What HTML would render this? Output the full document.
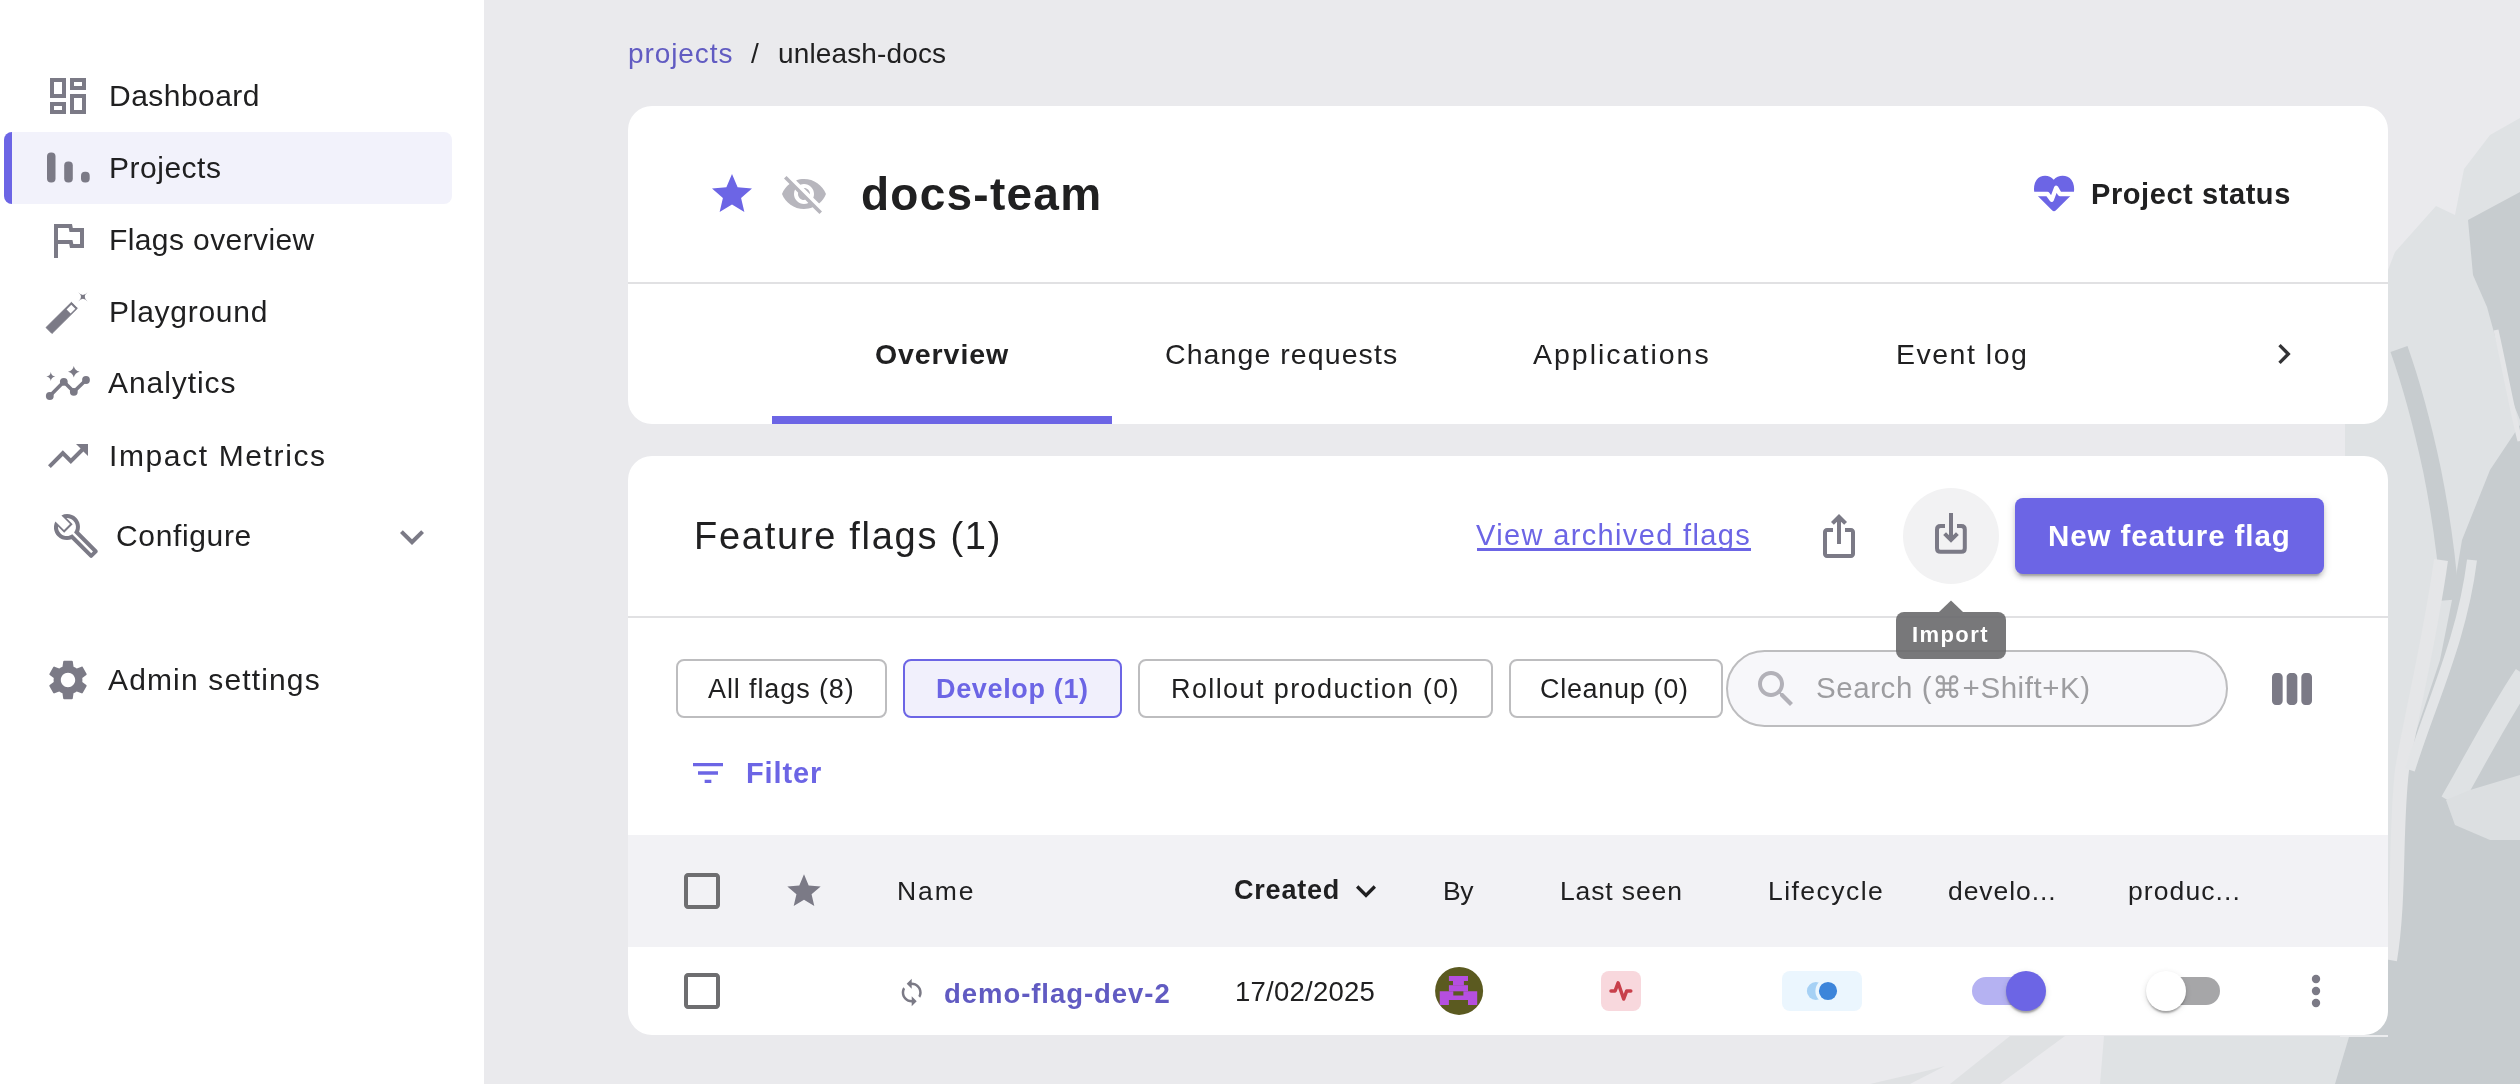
<!DOCTYPE html>
<html><head><meta charset="utf-8">
<style>
html,body{margin:0;padding:0;}
body{width:2520px;height:1084px;overflow:hidden;background:#eaeaed;position:relative;font-family:"Liberation Sans",sans-serif;}
.a{position:absolute;box-sizing:border-box;}
.t{position:absolute;white-space:nowrap;font-family:"Liberation Sans",sans-serif;z-index:5;will-change:transform;}
svg.layer{position:absolute;left:0;top:0;width:2520px;height:1084px;}
</style></head>
<body>
<!-- background texture -->
<svg class="layer" style="z-index:0" viewBox="0 0 2520 1084">
  <path fill="#dfe2e4" d="M2520 118 L2490 135 L2464 169 L2455 215 L2436 206 L2395 252 L2388 270 L2388 380 L2345 424 L2345 456 L2340 480 L2340 1036 L2104 1036 L2100 1084 L2520 1084 Z"/>
  <path fill="#dfe1e3" d="M2010 1036 L2065 1036 L2000 1084 L1950 1084 Z M1930 1070 L1945 1066 L1910 1084 L1870 1084 Z"/>
  <path fill="#c7cccf" d="M2520 192 L2468 220 L2473 275 L2487 307 L2501 358 L2510 395 L2520 420 Z"/>
  <path fill="none" stroke="#c7cccf" stroke-width="18" d="M2399 349 C2410 380 2422 423 2432 470 C2440 510 2447 560 2450 600"/>
  <path fill="#c7cccf" d="M2520 425 L2490 470 L2462 540 L2452 600 L2440 660 L2420 720 L2400 780 L2395 900 L2375 960 L2340 1000 L2340 1037 L2349 1037 L2335 1084 L2520 1084 Z"/>
  <path fill="none" stroke="#e5e6e8" stroke-width="5" d="M2496 330 C2505 370 2512 410 2520 441"/>
  <path fill="none" stroke="#e5e6e8" stroke-width="14" d="M2441 560 C2430 640 2410 720 2402 770 C2395 830 2400 900 2390 960"/>
  <path fill="none" stroke="#e3e5e7" stroke-width="10" d="M2472 560 C2462 640 2432 700 2410 770"/>
  <path fill="none" stroke="#dfe2e4" stroke-width="22" d="M2525 675 C2495 720 2470 770 2451 802"/>
  <path fill="#dcdfe1" d="M2446 800 L2470 790 L2520 775 L2520 840 L2490 840 L2455 825 Z"/>
</svg>

<!-- sidebar -->
<div class="a" style="left:0;top:0;width:484px;height:1084px;background:#ffffff;z-index:1"></div>
<div class="a" style="left:4px;top:132px;width:448px;height:72px;background:#f2f2fb;border-radius:8px;z-index:1;overflow:hidden">
  <div class="a" style="left:0;top:0;width:8px;height:72px;background:#6c65e5"></div>
</div>

<!-- card 1 -->
<div class="a" style="left:628px;top:106px;width:1760px;height:318px;background:#ffffff;border-radius:24px;z-index:1;overflow:hidden">
  <div class="a" style="left:0;top:176px;width:1760px;height:2px;background:#e1e1e3"></div>
  <div class="a" style="left:144px;top:310px;width:340px;height:8px;background:#6c65e5"></div>
</div>

<!-- card 2 -->
<div class="a" style="left:628px;top:456px;width:1760px;height:579px;background:#ffffff;border-radius:24px;z-index:1;overflow:hidden">
  <div class="a" style="left:0;top:160px;width:1760px;height:2px;background:#e1e1e3"></div>
  <div class="a" style="left:0;top:379px;width:1760px;height:112px;background:#f2f2f5"></div>
</div>

<div class="a" style="left:2340px;top:1035px;width:48px;height:2px;background:#ebecee;z-index:1"></div>
<!-- import circle -->
<div class="a" style="left:1903px;top:488px;width:96px;height:96px;border-radius:50%;background:#f2f2f3;z-index:2"></div>
<!-- new feature flag button -->
<div class="a" style="left:2015px;top:498px;width:309px;height:76px;border-radius:8px;background:#6c65e5;z-index:2;box-shadow:0 6px 2px -4px rgba(0,0,0,.2),0 4px 4px 0 rgba(0,0,0,.14),0 2px 10px 0 rgba(0,0,0,.12)"></div>

<!-- chips -->
<div class="a" style="left:676px;top:659px;width:211px;height:59px;border:2px solid #bdbdbf;border-radius:8px;background:#fff;z-index:2"></div>
<div class="a" style="left:903px;top:659px;width:219px;height:59px;border:2px solid #6c65e5;border-radius:8px;background:#f1f0fc;z-index:2"></div>
<div class="a" style="left:1138px;top:659px;width:355px;height:59px;border:2px solid #bdbdbf;border-radius:8px;background:#fff;z-index:2"></div>
<div class="a" style="left:1509px;top:659px;width:214px;height:59px;border:2px solid #bdbdbf;border-radius:8px;background:#fff;z-index:2"></div>
<!-- search -->
<div class="a" style="left:1726px;top:650px;width:502px;height:77px;border:2px solid #bdbdbf;border-radius:40px;background:#f7f7fa;z-index:2"></div>

<!-- row boxes -->
<div class="a" style="left:1601px;top:971px;width:40px;height:40px;border-radius:8px;background:#f8d8dd;z-index:2"></div>
<div class="a" style="left:1782px;top:971px;width:80px;height:40px;border-radius:8px;background:#ebf6fe;z-index:2"></div>

<!-- toggles -->
<div class="a" style="left:1972px;top:977px;width:68px;height:28px;border-radius:14px;background:#b5b2f2;z-index:2"></div>
<div class="a" style="left:2006px;top:971px;width:40px;height:40px;border-radius:50%;background:#6c65e5;z-index:2;box-shadow:0 4px 2px -2px rgba(0,0,0,.2),0 2px 2px 0 rgba(0,0,0,.14),0 2px 6px 0 rgba(0,0,0,.12)"></div>
<div class="a" style="left:2152px;top:977px;width:68px;height:28px;border-radius:14px;background:#a6a6a8;z-index:2"></div>
<div class="a" style="left:2146px;top:971px;width:40px;height:40px;border-radius:50%;background:#ffffff;z-index:2;box-shadow:0 4px 2px -2px rgba(0,0,0,.2),0 2px 2px 0 rgba(0,0,0,.14),0 2px 6px 0 rgba(0,0,0,.12)"></div>

<!-- icons -->
<svg class="layer" style="z-index:3" viewBox="0 0 2520 1084">
  <g fill="#7b7a86">
    <svg x="44" y="72" width="48" height="48" viewBox="0 0 24 24"><path d="M19 5v2h-4V5h4M9 5v6H5V5h4m10 8v6h-4v-6h4M9 17v2H5v-2h4M21 3h-8v6h8V3zM11 3H3v10h8V3zm10 8h-8v10h8V11zm-10 4H3v6h8v-6z"/></svg>
    <rect x="47" y="152.5" width="8.5" height="30" rx="4"/>
    <rect x="64.2" y="161.4" width="8.6" height="21.1" rx="4"/>
    <rect x="81" y="171.7" width="8.7" height="10.8" rx="4"/>
    <svg x="44" y="216" width="48" height="48" viewBox="0 0 24 24"><path d="M12.36 6l.4 2H18v6h-3.36l-.4-2H7V6h5.36M14 4H5v17h2v-7h5.6l.4 2h7V6h-5.6L14 4z"/></svg>
    <path d="M51.96 333.48 L46.04 327.52 L71.44 302.32 L77.36 308.28 Z" stroke="#7b7a86" stroke-width="1" stroke-linejoin="round"/>
    <path d="M66.6 309.4 L71.3 304.7 L75.3 308.7 L70.6 313.4 Z" fill="#ffffff"/>
    <path d="M78.25 292.15 Q82.9 297.6 87.55 292.15 Q82.1 296.8 87.55 301.45 Q82.9 296.0 78.25 301.45 Q83.7 296.8 78.25 292.15Z"/>
    <polyline points="49.8,396 63.8,381.8 73.8,391.8 86,380" fill="none" stroke="#7b7a86" stroke-width="3.6"/>
    <circle cx="49.8" cy="396" r="3.9"/><circle cx="63.8" cy="381.8" r="3.9"/><circle cx="73.8" cy="391.8" r="3.9"/><circle cx="86" cy="380" r="3.9"/>
    <path d="M73.8 365.9 Q74.8 370.7 79.6 371.7 Q74.8 372.7 73.8 377.5 Q72.8 372.7 68 371.7 Q72.8 370.7 73.8 365.9Z"/>
    <path d="M50.8 372.1 Q51.3 376.1 55.3 376.6 Q51.3 377.1 50.8 381.1 Q50.3 377.1 46.3 376.6 Q50.3 376.1 50.8 372.1Z"/>
    <svg x="44" y="432" width="48" height="48" viewBox="0 0 24 24"><path d="m16 6 2.29 2.29-4.88 4.88-4-4L2 16.59 3.41 18l6-6 4 4 6.3-6.29L22 12V6z"/></svg>
    <svg x="52" y="512" width="48" height="48" viewBox="0 0 24 24"><path d="M22.61 18.99l-9.08-9.08c.93-2.34.45-5.1-1.44-7-1.99-1.99-4.99-2.4-7.38-1.21l4.29 4.29-3 3-4.29-4.29C.44 7.1.85 10.1 2.84 12.09c1.87 1.87 4.66 2.38 6.94 1.51l9.08 9.08c.39.39 1.02.39 1.41 0l2.3-2.3c.4-.38.4-1.02.04-1.39zm-3 1.6l-9.46-9.46c-.61.45-1.29.72-2 .82-1.36.2-2.79-.21-3.83-1.25C3.37 9.76 2.93 8.5 3 7.26l3.09 3.09 4.24-4.24-3.09-3.09c1.24-.07 2.49.37 3.44 1.31 1.08 1.08 1.49 2.57 1.24 3.96-.12.71-.42 1.37-.88 1.96l9.45 9.45-.88.89z"/></svg>
    <svg x="388" y="513" width="48" height="48" viewBox="0 0 24 24"><path d="M16.59 8.59 12 13.17 7.41 8.59 6 10l6 6 6-6z"/></svg>
    <svg x="44" y="656" width="48" height="48" viewBox="0 0 24 24"><path d="M19.14 12.94c.04-.3.06-.61.06-.94 0-.32-.02-.64-.07-.94l2.03-1.58c.18-.14.23-.41.12-.61l-1.92-3.32c-.12-.22-.37-.29-.59-.22l-2.39.96c-.5-.38-1.03-.7-1.62-.94l-.36-2.54c-.04-.24-.24-.41-.48-.41h-3.84c-.24 0-.43.17-.47.41l-.36 2.54c-.59.24-1.13.57-1.62.94l-2.39-.96c-.22-.08-.47 0-.59.22L2.74 8.87c-.12.21-.08.47.12.61l2.03 1.58c-.05.3-.09.63-.09.94s.02.64.07.94l-2.03 1.58c-.18.14-.23.41-.12.61l1.92 3.32c.12.22.37.29.59.22l2.39-.96c.5.38 1.03.7 1.62.94l.36 2.54c.05.24.24.41.48.41h3.84c.24 0 .44-.17.47-.41l.36-2.54c.59-.24 1.13-.56 1.62-.94l2.39.96c.22.08.47 0 .59-.22l1.92-3.32c.12-.22.07-.47-.12-.61l-2.01-1.58zM12 15.6c-1.98 0-3.6-1.62-3.6-3.6s1.62-3.6 3.6-3.6 3.6 1.62 3.6 3.6-1.62 3.6-3.6 3.6z"/></svg>
  </g>
  <!-- card1 icons -->
  <svg x="708" y="170" width="48" height="48" viewBox="0 0 24 24" fill="#6c65e5"><path d="M12 17.27 18.18 21l-1.64-7.03L22 9.24l-7.19-.61L12 2 9.19 8.63 2 9.24l5.46 4.73L5.82 21z"/></svg>
  <svg x="780" y="170" width="48" height="48" viewBox="0 0 24 24" fill="#b7b6bd"><path d="M12 7c2.76 0 5 2.24 5 5 0 .65-.13 1.26-.36 1.83l2.92 2.92c1.51-1.26 2.7-2.89 3.43-4.75-1.73-4.39-6-7.5-10.99-7.5-1.4 0-2.74.25-3.98.7l2.16 2.16C10.74 7.13 11.35 7 12 7zM2 4.27l2.28 2.28.46.46C3.08 8.3 1.78 10.02 1 12c1.73 4.39 6 7.5 11 7.5 1.55 0 3.03-.3 4.38-.84l.42.42L19.73 22 21 20.73 3.27 3 2 4.27zM7.53 9.8l1.55 1.55c-.05.21-.08.43-.08.65 0 1.66 1.34 3 3 3 .22 0 .44-.03.65-.08l1.55 1.55c-.67.33-1.41.53-2.2.53-2.76 0-5-2.24-5-5 0-.79.2-1.53.53-2.2zm4.31-.78 3.15 3.15.02-.16c0-1.66-1.34-3-3-3l-.17.01z"/></svg>
  <g>
    <path fill="#6c65e5" d="M2056 210.2 Q2054 212.2 2052 210.2 L2034.3 192.6 C2033.6 188 2034 183.5 2036.5 180 C2040.5 174.5 2049.5 174.5 2053.7 179.8 C2058 174.5 2067.5 174.5 2071.5 180 C2074 183.5 2074.6 188 2073.9 192.6 Z"/>
    <polyline fill="none" stroke="#ffffff" stroke-width="4.4" stroke-linejoin="round" points="2028,194 2047.5,194 2051.7,199.8 2056.2,187.8 2059.8,194 2080,194"/>
  </g>
  <svg x="2264" y="334" width="40" height="40" viewBox="0 0 24 24" fill="#333335"><path d="M8.59 16.59 13.17 12 8.59 7.41 10 6l6 6-6 6-1.41-1.41z"/></svg>
  <!-- card2 icons -->
  <svg x="1815" y="512" width="48" height="48" viewBox="0 0 24 24" fill="#7b7a86"><path d="M16 5l-1.42 1.42-1.59-1.59V16h-1.98V4.83L9.42 6.42 8 5l4-4 4 4zm4 5v11c0 1.1-.9 2-2 2H6c-1.11 0-2-.9-2-2V10c0-1.11.89-2 2-2h3v2H6v11h12V10h-3V8h3c1.1 0 2 .89 2 2z"/></svg>
  <g fill="none" stroke="#7b7a86" stroke-width="4">
    <path d="M1951 513 V540"/>
    <polyline points="1944.6,533.6 1951,540 1957.4,533.6"/>
    <path d="M1945 526.1 H1940.5 Q1937 526.1 1937 529.6 V548.2 Q1937 551.7 1940.5 551.7 H1961.3 Q1964.8 551.7 1964.8 548.2 V529.6 Q1964.8 526.1 1961.3 526.1 H1957"/>
  </g>
  <svg x="1752" y="665" width="48" height="48" viewBox="0 0 24 24" fill="#b2b1b8"><path d="M15.5 14h-.79l-.28-.27C15.41 12.59 16 11.11 16 9.5 16 5.91 13.09 3 9.5 3S3 5.91 3 9.5 5.91 16 9.5 16c1.61 0 3.090-.59 4.23-1.57l.27.28v.79l5 4.99L20.49 19l-4.99-5zm-6 0C7.01 14 5 11.99 5 9.5S7.01 5 9.5 5 14 7.01 14 9.5 11.99 14 9.5 14z"/></svg>
  <svg x="2268" y="665" width="48" height="48" viewBox="0 0 24 24" fill="#7b7a86"><path d="M5.33 20H4c-1.1 0-2-.9-2-2V6c0-1.1.9-2 2-2h1.33c1.1 0 2 .9 2 2v12c0 1.1-.89 2-2 2zM22 18V6c0-1.1-.9-2-2-2h-1.33c-1.1 0-2 .9-2 2v12c0 1.1.9 2 2 2H20c1.1 0 2-.9 2-2zm-7.33 0V6c0-1.1-.9-2-2-2h-1.33c-1.1 0-2 .9-2 2v12c0 1.1.9 2 2 2h1.33c1.1 0 2-.9 2-2z"/></svg>
  <svg x="688" y="753" width="40" height="40" viewBox="0 0 24 24" fill="#6c65e5"><path d="M10 18h4v-2h-4v2zM3 6v2h18V6H3zm3 7h12v-2H6v2z"/></svg>
  <svg x="678" y="867" width="48" height="48" viewBox="0 0 24 24" fill="#6e6e70"><path d="M19 5v14H5V5h14m0-2H5c-1.1 0-2 .9-2 2v14c0 1.1.9 2 2 2h14c1.1 0 2-.9 2-2V5c0-1.1-.9-2-2-2z"/></svg>
  <svg x="678" y="967" width="48" height="48" viewBox="0 0 24 24" fill="#6e6e70"><path d="M19 5v14H5V5h14m0-2H5c-1.1 0-2 .9-2 2v14c0 1.1.9 2 2 2h14c1.1 0 2-.9 2-2V5c0-1.1-.9-2-2-2z"/></svg>
  <svg x="784" y="871" width="40" height="40" viewBox="0 0 24 24" fill="#7b7a86"><path d="M12 17.27 18.18 21l-1.64-7.03L22 9.24l-7.19-.61L12 2 9.19 8.63 2 9.24l5.46 4.73L5.82 21z"/></svg>
  <svg x="1346" y="871" width="40" height="40" viewBox="0 0 24 24" fill="#202021"><path d="M7.41 8.59 12 13.17l4.59-4.58L18 10l-6 6-6-6 1.41-1.41z"/></svg>
  <svg x="896.7" y="977.5" width="30" height="30" viewBox="0 0 24 24" fill="#7b7a86"><path d="M12 4V1L8 5l4 4V6c3.31 0 6 2.69 6 6 0 1.01-.25 1.97-.7 2.8l1.46 1.46C19.54 15.03 20 13.57 20 12c0-4.42-3.58-8-8-8zm0 14c-3.31 0-6-2.69-6-6 0-1.01.25-1.97.7-2.8L5.24 7.74C4.46 8.97 4 10.430 4 12c0 4.42 3.58 8 8 8v3l4-4-4-4v3z"/></svg>
  <!-- avatar -->
  <circle cx="1459.1" cy="990.9" r="24" fill="#5b5a20"/>
  <g fill="#b54fe0">
    <rect x="1448.9" y="976" width="19.1" height="5"/>
    <rect x="1453" y="980.9" width="10.9" height="4.4"/>
    <rect x="1448.9" y="985.2" width="19.1" height="6.1"/>
    <path d="M1439.75 991.2 H1477.2 V1004.9 H1468 V1000 H1448.9 V1004.9 H1439.75 Z M1453.3 991.2 V995.5 H1463.4 V991.2 Z" fill-rule="evenodd"/>
  </g>
  <polyline fill="none" stroke="#c8404b" stroke-width="3.5" stroke-linecap="round" stroke-linejoin="round" points="1611,990.9 1615.1,990.9 1618.1,982.8 1623.7,999 1626.7,990.9 1630.8,990.9"/>
  <!-- lifecycle -->
  <path fill="#a6d1f5" fill-rule="evenodd" d="M1815.9 982 A9 9 0 1 0 1815.9 1000 A9 9 0 1 0 1815.9 982 Z"/>
  <circle cx="1828" cy="991" r="12.6" fill="#ebf6fe"/>
  <circle cx="1828" cy="991" r="9.1" fill="#3d85da"/>
  <!-- kebab -->
  <g fill="#7b7a86"><circle cx="2316" cy="979" r="4.2"/><circle cx="2316" cy="991" r="4.2"/><circle cx="2316" cy="1003" r="4.2"/></g>
</svg>

<div class="t" id="sb1" style="left:109.00px;top:81.10px;font-size:30.00px;line-height:30.00px;letter-spacing:0.462px;color:#202021;">Dashboard</div>
<div class="t" id="sb2" style="left:109.00px;top:152.60px;font-size:30.00px;line-height:30.00px;letter-spacing:0.514px;color:#202021;">Projects</div>
<div class="t" id="sb3" style="left:108.60px;top:224.60px;font-size:30.00px;line-height:30.00px;letter-spacing:0.400px;color:#202021;">Flags overview</div>
<div class="t" id="sb4" style="left:108.60px;top:297.00px;font-size:30.00px;line-height:30.00px;letter-spacing:0.733px;color:#202021;">Playground</div>
<div class="t" id="sb5" style="left:108.00px;top:368.40px;font-size:30.00px;line-height:30.00px;letter-spacing:0.925px;color:#202021;">Analytics</div>
<div class="t" id="sb6" style="left:109.00px;top:441.10px;font-size:30.00px;line-height:30.00px;letter-spacing:1.615px;color:#202021;">Impact Metrics</div>
<div class="t" id="sb7" style="left:116.40px;top:520.60px;font-size:30.00px;line-height:30.00px;letter-spacing:0.650px;color:#202021;">Configure</div>
<div class="t" id="sb8" style="left:107.80px;top:664.60px;font-size:30.00px;line-height:30.00px;letter-spacing:1.146px;color:#202021;">Admin settings</div>
<div class="t" id="bc1" style="left:628.00px;top:40.29px;font-size:28.00px;line-height:28.00px;letter-spacing:0.914px;color:#615bc2;">projects</div>
<div class="t" id="bc2" style="left:750.60px;top:40.29px;font-size:28.00px;line-height:28.00px;letter-spacing:0.000px;color:#202021;">/</div>
<div class="t" id="bc3" style="left:777.80px;top:40.29px;font-size:28.00px;line-height:28.00px;letter-spacing:0.136px;color:#202021;">unleash-docs</div>
<div class="t" id="h1" style="left:860.60px;top:170.95px;font-size:46.00px;line-height:46.00px;letter-spacing:1.250px;color:#202021;font-weight:700;">docs-team</div>
<div class="t" id="h2" style="left:2090.60px;top:179.65px;font-size:29.00px;line-height:29.00px;letter-spacing:0.577px;color:#202021;font-weight:700;">Project status</div>
<div class="t" id="t1" style="left:874.50px;top:340.27px;font-size:28.50px;line-height:28.50px;letter-spacing:0.914px;color:#202021;font-weight:700;">Overview</div>
<div class="t" id="t2" style="left:1165.00px;top:340.27px;font-size:28.50px;line-height:28.50px;letter-spacing:1.079px;color:#202021;">Change requests</div>
<div class="t" id="t3" style="left:1533.20px;top:340.27px;font-size:28.50px;line-height:28.50px;letter-spacing:2.000px;color:#202021;">Applications</div>
<div class="t" id="t4" style="left:1896.00px;top:340.27px;font-size:28.50px;line-height:28.50px;letter-spacing:1.500px;color:#202021;">Event log</div>
<div class="t" id="c1" style="left:693.70px;top:516.73px;font-size:38.00px;line-height:38.00px;letter-spacing:1.719px;color:#202021;">Feature flags (1)</div>
<div class="t" id="c2" style="left:1476.30px;top:521.45px;font-size:29.00px;line-height:29.00px;letter-spacing:1.361px;color:#6c65e5;">View archived flags</div>
<div class="t" id="c3" style="left:2048.00px;top:521.02px;font-size:29.50px;line-height:29.50px;letter-spacing:0.933px;color:#ffffff;font-weight:700;">New feature flag</div>
<div class="t" id="ch1" style="left:707.60px;top:675.84px;font-size:27.00px;line-height:27.00px;letter-spacing:0.892px;color:#202021;">All flags (8)</div>
<div class="t" id="ch2" style="left:936.00px;top:675.84px;font-size:27.00px;line-height:27.00px;letter-spacing:0.650px;color:#6c65e5;font-weight:700;">Develop (1)</div>
<div class="t" id="ch3" style="left:1171.00px;top:675.84px;font-size:27.00px;line-height:27.00px;letter-spacing:1.400px;color:#202021;">Rollout production (0)</div>
<div class="t" id="ch4" style="left:1540.25px;top:675.84px;font-size:27.00px;line-height:27.00px;letter-spacing:0.690px;color:#202021;">Cleanup (0)</div>
<div class="t" id="s1" style="left:1816.00px;top:673.42px;font-size:29.50px;line-height:29.50px;letter-spacing:0.568px;color:#9d9da0;">Search (⌘+Shift+K)</div>
<div class="t" id="f1" style="left:745.70px;top:759.35px;font-size:29.00px;line-height:29.00px;letter-spacing:0.860px;color:#6c65e5;font-weight:700;">Filter</div>
<div class="t" id="th1" style="left:896.80px;top:877.66px;font-size:26.50px;line-height:26.50px;letter-spacing:1.900px;color:#202021;">Name</div>
<div class="t" id="th2" style="left:1234.00px;top:877.24px;font-size:27.00px;line-height:27.00px;letter-spacing:0.800px;color:#202021;font-weight:700;">Created</div>
<div class="t" id="th3" style="left:1443.00px;top:877.66px;font-size:26.50px;line-height:26.50px;letter-spacing:-0.400px;color:#202021;">By</div>
<div class="t" id="th4" style="left:1560.00px;top:877.66px;font-size:26.50px;line-height:26.50px;letter-spacing:0.875px;color:#202021;">Last seen</div>
<div class="t" id="th5" style="left:1767.80px;top:877.66px;font-size:26.50px;line-height:26.50px;letter-spacing:1.450px;color:#202021;">Lifecycle</div>
<div class="t" id="th6" style="left:1947.70px;top:877.66px;font-size:26.50px;line-height:26.50px;letter-spacing:0.938px;color:#202021;">develo...</div>
<div class="t" id="th7" style="left:2128.00px;top:877.66px;font-size:26.50px;line-height:26.50px;letter-spacing:1.088px;color:#202021;">produc...</div>
<div class="t" id="r1" style="left:944.00px;top:980.02px;font-size:27.50px;line-height:27.50px;letter-spacing:0.950px;color:#615bc2;font-weight:700;">demo-flag-dev-2</div>
<div class="t" id="r2" style="left:1235.00px;top:978.02px;font-size:27.50px;line-height:27.50px;letter-spacing:0.244px;color:#202021;">17/02/2025</div>
<div class="a" style="left:1477px;top:548px;width:274px;height:2.5px;background:#6c65e5;z-index:5"></div>

<!-- tooltip -->
<div class="a" style="left:1896px;top:612px;width:110px;height:47px;border-radius:8px;background:rgba(105,105,107,0.9);z-index:10"></div>
<svg class="a" style="left:1939px;top:600px;z-index:10" width="24" height="12" viewBox="0 0 24 12"><path d="M0 12 L12 0.5 L24 12 Z" fill="rgba(105,105,107,0.9)"/></svg>
<div style="position:absolute;left:0;top:0;z-index:11"><div class="t" id="tt" style="left:1912.40px;top:623.67px;font-size:22.00px;line-height:22.00px;letter-spacing:1.420px;color:#ffffff;font-weight:700;">Import</div></div>
</body></html>
